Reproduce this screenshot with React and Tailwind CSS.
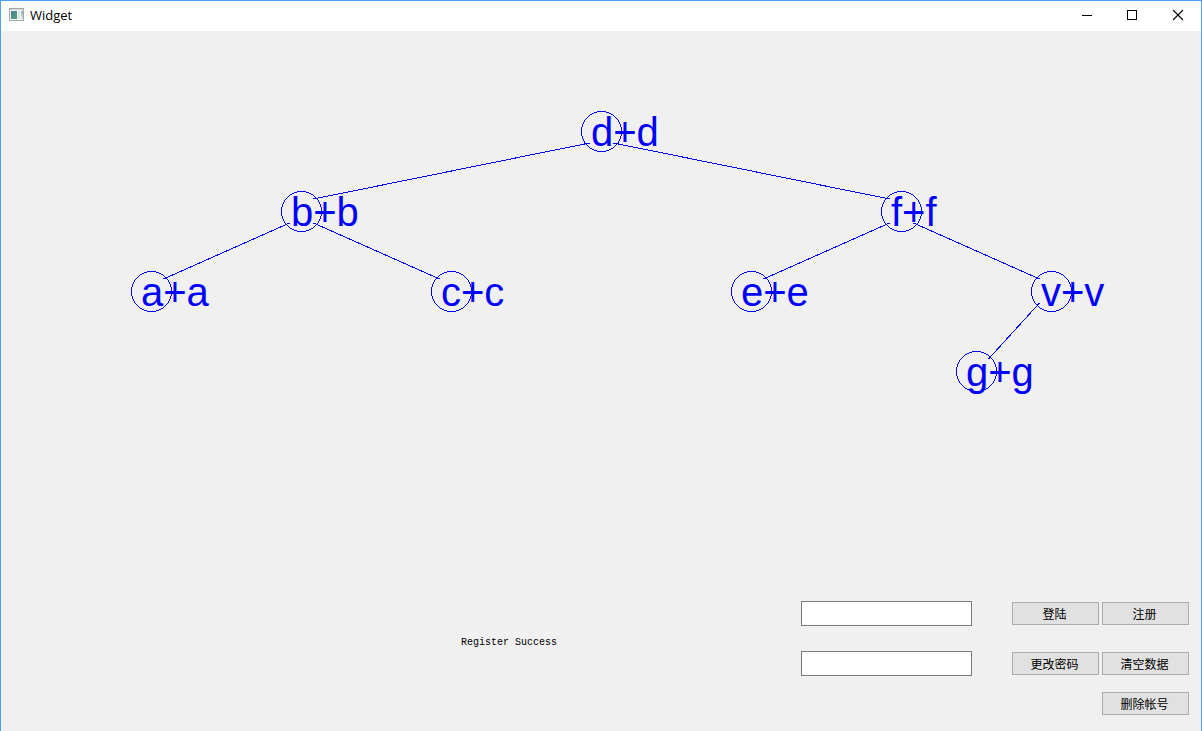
const NODES = [
  { id: 'd', x: 600, y: 100, parent: null },
  { id: 'b', x: 300, y: 180, parent: 'd' },
  { id: 'f', x: 900, y: 180, parent: 'd' },
  { id: 'a', x: 150, y: 260, parent: 'b' },
  { id: 'c', x: 450, y: 260, parent: 'b' },
  { id: 'e', x: 750, y: 260, parent: 'f' },
  { id: 'v', x: 1050, y: 260, parent: 'f' },
  { id: 'g', x: 975, y: 340, parent: 'v' },
];

function Edge({ node }) {
  const parent = NODES.find((n) => n.id === node.parent);
  const side = node.x < parent.x ? -1 : 1;
  return (
    <line
      x1={parent.x + side * 12}
      y1={parent.y + 12}
      x2={node.x - side * 12}
      y2={node.y - 12}
      transform="translate(0.5 0)"
    />
  );
}

function Tree() {
  return (
    <svg viewBox="0 0 1200 560" className="block h-auto w-full" role="img" aria-label="Tree">
      <g fill="none" stroke="#0000ff" strokeWidth="1" shapeRendering="crispEdges">
        {NODES.filter((n) => n.parent).map((n) => (
          <Edge key={n.id} node={n} />
        ))}
        {NODES.map((n) => (
          <circle key={n.id} cx={n.x + 0.5} cy={n.y + 0.5} r="20" />
        ))}
      </g>
      <g fill="#0000ff" className="font-['Liberation_Sans',Arial,sans-serif] text-[40px]">
        {NODES.map((n) => (
          <text key={n.id} x={n.x - 10} y={n.y + 15}>
            {`${n.id}+${n.id}`}
          </text>
        ))}
      </g>
    </svg>
  );
}

function AppIcon() {
  return (
    <svg width="16" height="16" viewBox="0 0 16 16" aria-hidden="true">
      <defs>
        <linearGradient id="pane" x1="0" y1="0" x2="1" y2="1">
          <stop offset="0" stopColor="#4a7a9c" />
          <stop offset="1" stopColor="#4fa574" />
        </linearGradient>
        <linearGradient id="strip" x1="0" y1="0" x2="0" y2="1">
          <stop offset="0" stopColor="#8fb0cb" />
          <stop offset="0.5" stopColor="#a9cdb5" />
          <stop offset="1" stopColor="#e4e9ee" />
        </linearGradient>
      </defs>
      <rect x="0.5" y="1.5" width="14" height="12" fill="#f4f4f4" stroke="#a3a5a8" />
      <rect x="1" y="2" width="13" height="1" fill="#d3d5d8" />
      <rect x="2" y="4" width="6" height="8" fill="url(#pane)" />
      <rect x="9" y="4" width="2" height="8" fill="#dfe5ea" />
      <rect x="12" y="4" width="2" height="8" fill="url(#strip)" />
    </svg>
  );
}

function CaptionButton({ label, children }) {
  return (
    <button type="button" aria-label={label} className="flex h-full w-[46px] items-center justify-center hover:bg-gray-200">
      <svg width="10" height="10" viewBox="0 0 10 10" fill="none" stroke="#000000" className="overflow-visible" aria-hidden="true">
        {children}
      </svg>
    </button>
  );
}

function TitleBar() {
  return (
    <header className="flex h-[30px] items-center bg-white pb-0.5 pl-2">
      <AppIcon />
      <h1 className="flex-1 pl-[5px] font-['Open_Sans','Noto_Sans',sans-serif] text-[13px] leading-4 text-black">Widget</h1>
      <CaptionButton label="Minimize">
        <path d="M1 5.5H11" shapeRendering="crispEdges" />
      </CaptionButton>
      <CaptionButton label="Maximize">
        <path d="M0.5 0.5H9.5V9.5H0.5Z" shapeRendering="crispEdges" />
      </CaptionButton>
      <CaptionButton label="Close">
        <path d="M0 0L10 10M10 0L0 10" strokeWidth="1.1" />
      </CaptionButton>
    </header>
  );
}

function PushButton({ children }) {
  return (
    <button
      type="button"
      className="h-[23px] w-[87px] border border-[#adadad] bg-[#e1e1e1] pt-0.5 pr-0.5 text-center text-[12px] leading-4 text-black hover:border-[#0078d7] hover:bg-[#e5f1fb]"
    >
      {children}
    </button>
  );
}

function LineEdit({ label, type }) {
  return (
    <input
      type={type}
      aria-label={label}
      autoComplete="off"
      className="h-[25px] w-[171px] border border-[#7a7a7a] bg-white px-1 text-[12px] text-black outline-none focus:border-[#0078d7]"
    />
  );
}

export default function App() {
  return (
    <div className="flex min-h-screen flex-col border-x border-t border-[#4c9ff5] bg-[#f0f0f0] font-['Liberation_Sans','Noto_Sans_CJK_SC',sans-serif]">
      <TitleBar />
      <main className="flex flex-1 flex-col justify-between">
        <Tree />
        <form className="flex items-start pt-[10px] pr-3 pb-4" onSubmit={(e) => e.preventDefault()}>
          <p role="status" className="flex-1 pt-[34px] pr-[244px] text-right font-['Liberation_Mono',monospace] text-[10px] leading-4 text-black">
            Register Success
          </p>
          <div className="flex flex-col gap-[25px]">
            <LineEdit label="Account" type="text" />
            <LineEdit label="Password" type="password" />
          </div>
          <div className="flex flex-col items-end pt-px pl-10">
            <div className="flex gap-[3px]">
              <PushButton>登陆</PushButton>
              <PushButton>注册</PushButton>
            </div>
            <div className="flex gap-[3px] pt-[27px]">
              <PushButton>更改密码</PushButton>
              <PushButton>清空数据</PushButton>
            </div>
            <div className="flex pt-[17px]">
              <PushButton>删除帐号</PushButton>
            </div>
          </div>
        </form>
      </main>
    </div>
  );
}
